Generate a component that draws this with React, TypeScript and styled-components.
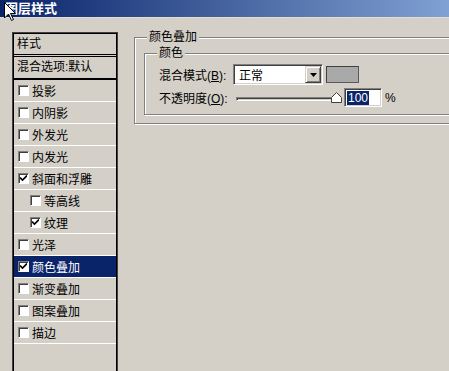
import React from 'react';
import styled, { createGlobalStyle } from 'styled-components';

const GlobalStyle = createGlobalStyle`
  html, body {
    margin: 0;
    padding: 0;
    background: #d4d0c8;
  }
  body {
    font-family: "Liberation Sans", "Noto Sans CJK SC", sans-serif;
    font-size: 12px;
    color: #000;
  }
`;

const Window = styled.div`
  position: relative;
  width: 449px;
  height: 371px;
  overflow: hidden;
  background: #d4d0c8;
  display: flex;
  flex-direction: column;
`;

const TitleBar = styled.div`
  flex: none;
  height: 17px;
  line-height: 17px;
  padding-left: 5px;
  background: linear-gradient(90deg, #0a246a 0%, #80a1d3 100%);
  border-bottom: 1px solid #e2ded6;
  color: #fff;
  font-weight: bold;
  font-size: 13px;
`;

const Cursor = styled.svg`
  position: absolute;
  left: 4px;
  top: 2px;
`;

const Body = styled.div`
  display: flex;
  align-items: flex-start;
  gap: 17px;
  padding: 14px 0 0 12px;
`;

const StyleList = styled.div`
  flex: none;
  width: 104px;
  height: 360px;
  box-sizing: border-box;
  border: 1px solid #000;
  box-shadow: 0 0 0 1px #404040;
  margin: 1px 0 0 1px;
`;

const ListHeader = styled.div`
  height: 20px;
  line-height: 20px;
  padding-left: 3px;
  border-bottom: 3px double #000;
`;

const BlendRow = styled.div`
  height: 21px;
  line-height: 21px;
  padding-left: 3px;
  border-bottom: 2px solid #000;
`;

const Item = styled.div<{ $indent?: boolean; $selected?: boolean }>`
  display: flex;
  align-items: center;
  gap: 3px;
  height: 21px;
  padding-left: ${(p) => (p.$indent ? 16 : 4)}px;
  border-bottom: 1px solid #fff;
  background: ${(p) => (p.$selected ? '#0a246a' : 'transparent')};
  color: ${(p) => (p.$selected ? '#fff' : '#000')};
`;

const CheckBox = styled.span`
  flex: none;
  width: 11px;
  height: 11px;
  box-sizing: border-box;
  background: #fff;
  border-style: solid;
  border-width: 1px;
  border-color: #808080 #fff #fff #808080;
  box-shadow: inset 1px 1px 0 #404040;
  display: flex;
  align-items: center;
  justify-content: center;
`;

const RightPane = styled.div`
  flex: none;
  margin-top: 5px;
  width: 340px;
`;

const GroupBox = styled.div<{ $padTop: number; $padLeft: number; $padBottom: number }>`
  position: relative;
  border: 1px solid #808080;
  box-shadow: inset 1px 1px 0 #fff, 1px 1px 0 #fff;
  padding: ${(p) => p.$padTop}px 10px ${(p) => p.$padBottom}px ${(p) => p.$padLeft}px;
`;

const Legend = styled.span`
  position: absolute;
  left: 12px;
  top: -8px;
  line-height: 14px;
  padding: 0 2px;
  background: #d4d0c8;
`;

const FieldRow = styled.div<{ $height: number }>`
  display: flex;
  align-items: center;
  height: ${(p) => p.$height}px;
`;

const FieldLabel = styled.span`
  flex: none;
  width: 74px;
  u {
    text-decoration: underline;
  }
`;

const Sunken = styled.div`
  box-sizing: border-box;
  border-style: solid;
  border-width: 1px;
  border-color: #808080 #fff #fff #808080;
  box-shadow: inset 1px 1px 0 #404040, inset -1px -1px 0 #d4d0c8;
  background: #fff;
`;

const Select = styled(Sunken)`
  width: 90px;
  height: 21px;
  display: flex;
  align-items: center;
  justify-content: space-between;
  padding: 1px;
`;

const SelectText = styled.span`
  padding-left: 4px;
`;

const DropButton = styled.span`
  width: 16px;
  height: 17px;
  box-sizing: border-box;
  background: #d4d0c8;
  border-style: solid;
  border-width: 1px;
  border-color: #d4d0c8 #404040 #404040 #d4d0c8;
  box-shadow: inset 1px 1px 0 #fff, inset -1px -1px 0 #808080;
  display: flex;
  align-items: center;
  justify-content: center;
`;

const Swatch = styled.span`
  margin-left: 3px;
  width: 33px;
  height: 17px;
  box-sizing: border-box;
  background: #a9a9a9;
  border: 1px solid #404040;
  border-color: #404040 #5a5a5a #5a5a5a #404040;
`;

const Slider = styled.div`
  position: relative;
  flex: none;
  width: 111px;
  height: 19px;
  display: flex;
  align-items: center;
  padding: 3px 6px 0 3px;
  box-sizing: border-box;
`;

const Track = styled.div`
  flex: 1;
  height: 4px;
  box-sizing: border-box;
  border-style: solid;
  border-width: 1px;
  border-color: #808080 #fff #fff #808080;
  box-shadow: inset 1px 1px 0 #404040;
  background: #d4d0c8;
`;

const Thumb = styled.svg`
  position: absolute;
  right: 2px;
  top: 4px;
`;

const ValueInput = styled(Sunken)`
  width: 38px;
  height: 19px;
  padding: 0 2px;
  display: flex;
  align-items: center;
`;

const Selection = styled.span`
  background: #0a246a;
  color: #fff;
  line-height: 14px;
  font-size: 12px;
  padding: 0 1px;
`;

const Percent = styled.span`
  margin-left: 3px;
`;

type Effect = { label: string; checked?: boolean; indent?: boolean; selected?: boolean };

const effects: Effect[] = [
  { label: '投影' },
  { label: '内阴影' },
  { label: '外发光' },
  { label: '内发光' },
  { label: '斜面和浮雕', checked: true },
  { label: '等高线', indent: true },
  { label: '纹理', checked: true, indent: true },
  { label: '光泽' },
  { label: '颜色叠加', checked: true, selected: true },
  { label: '渐变叠加' },
  { label: '图案叠加' },
  { label: '描边' },
];

const Check = () => (
  <svg width="7" height="7" viewBox="0 0 7 7">
    <path d="M0 2.5 L2.5 5 L7 0.5" fill="none" stroke="#000" strokeWidth="1.6" />
  </svg>
);

const App: React.FC = () => {
  return (
    <Window>
      <GlobalStyle />
      <TitleBar>图层样式</TitleBar>
      <Cursor width="13" height="20" viewBox="0 0 13 20">
        <path d="M0.5 0.5 L0.5 16 L4.5 12 L7.5 18.5 L9.5 17.5 L6.5 11.5 L11.5 11.5 Z" fill="#fff" stroke="#000" strokeWidth="1" />
      </Cursor>
      <Body>
        <StyleList>
          <ListHeader>样式</ListHeader>
          <BlendRow>混合选项:默认</BlendRow>
          {effects.map((e) => (
            <Item key={e.label} $indent={e.indent} $selected={e.selected}>
              <CheckBox>{e.checked && <Check />}</CheckBox>
              <span>{e.label}</span>
            </Item>
          ))}
        </StyleList>
        <RightPane>
          <GroupBox $padTop={15} $padLeft={9} $padBottom={8}>
            <Legend>颜色叠加</Legend>
            <GroupBox $padTop={10} $padLeft={14} $padBottom={7}>
              <Legend>颜色</Legend>
              <FieldRow $height={21}>
                <FieldLabel>
                  混合模式(<u>B</u>):
                </FieldLabel>
                <Select>
                  <SelectText>正常</SelectText>
                  <DropButton>
                    <svg width="7" height="4" viewBox="0 0 7 4">
                      <path d="M0 0 H7 L3.5 4 Z" fill="#000" />
                    </svg>
                  </DropButton>
                </Select>
                <Swatch />
              </FieldRow>
              <FieldRow $height={19} style={{ marginTop: 3 }}>
                <FieldLabel>
                  不透明度(<u>O</u>):
                </FieldLabel>
                <Slider>
                  <Track />
                  <Thumb width="11" height="11" viewBox="0 0 11 11">
                    <path d="M5.5 0.5 L10.5 5.5 L10.5 10.5 L0.5 10.5 L0.5 5.5 Z" fill="#fff" stroke="#404040" strokeWidth="1" />
                  </Thumb>
                </Slider>
                <ValueInput>
                  <Selection>100</Selection>
                </ValueInput>
                <Percent>%</Percent>
              </FieldRow>
            </GroupBox>
          </GroupBox>
        </RightPane>
      </Body>
    </Window>
  );
};

export default App;
